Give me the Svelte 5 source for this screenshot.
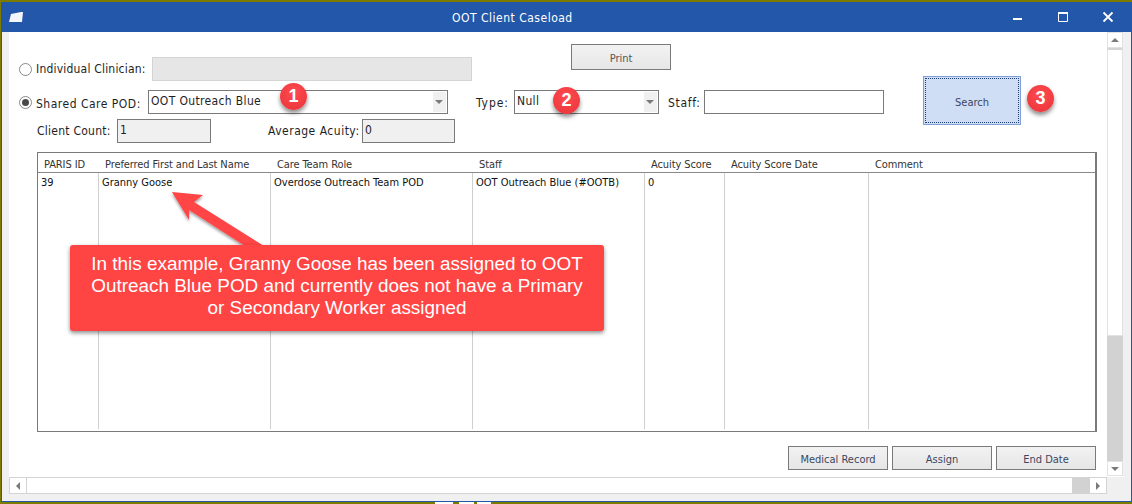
<script lang="ts">
	const columns = [
		{ title: 'PARIS ID', value: '39', width: 61 },
		{ title: 'Preferred First and Last Name', value: 'Granny Goose', width: 172 },
		{ title: 'Care Team Role', value: 'Overdose Outreach Team POD', width: 202 },
		{ title: 'Staff', value: 'OOT Outreach Blue (#OOTB)', width: 172 },
		{ title: 'Acuity Score', value: '0', width: 80 },
		{ title: 'Acuity Score Date', value: '', width: 144 },
		{ title: 'Comment', value: '', width: 227 }
	];
	const badges = [
		{ n: 1, x: 293, y: 96 },
		{ n: 2, x: 566, y: 100 },
		{ n: 3, x: 1040, y: 98 }
	];
</script>

<div class="desktop">
	<div class="window">
		<header class="titlebar">
			<svg class="appicon" width="14" height="12" viewBox="0 0 14 12"><path d="M2 3 L12 1 L14 1 L13 11 L0 11 Z" fill="#fff" opacity="0.95" /></svg>
			<span class="title">OOT Client Caseload</span>
			<div class="controls">
				<svg width="12" height="12" viewBox="0 0 12 12"><rect x="1" y="7" width="9" height="2" fill="#fff" /></svg>
				<svg width="12" height="12" viewBox="0 0 12 12"><path d="M1.5 1.5h9v9h-9z" fill="none" stroke="#fff" /><rect x="1" y="1" width="10" height="2" fill="#fff" /></svg>
				<svg width="12" height="12" viewBox="0 0 12 12"><path d="M1.5 1.5l9 9M10.5 1.5l-9 9" stroke="#fff" stroke-width="1.8" /></svg>
			</div>
		</header>

		<div class="frame">
			<div class="inner">
				<main class="client">
					<div class="print-row"><button class="btn print">Print</button></div>

					<div class="row clinician">
						<span class="radio"></span>
						<span class="label clinician-label">Individual Clinician:</span>
						<div class="field disabled"></div>
					</div>

					<div class="row pod">
						<span class="radio on"></span>
						<span class="label pod-label">Shared Care POD:</span>
						<div class="field combo pod-combo"><span>OOT Outreach Blue</span><i class="drop"></i></div>
						<span class="label type-label">Type:</span>
						<div class="field combo type-combo"><span>Null</span><i class="drop"></i></div>
						<span class="label staff-label">Staff:</span>
						<div class="field staff"></div>
						<button class="btn search"><span>Search</span></button>
					</div>

					<div class="row counts">
						<span class="label count-label">Client Count:</span>
						<div class="field readonly count">1</div>
						<span class="label acuity-label">Average Acuity:</span>
						<div class="field readonly acuity">0</div>
					</div>

					<div class="grid">
						<div class="grid-head">
							{#each columns as c}
								<div class="th" style="width:{c.width}px">{c.title}</div>
							{/each}
						</div>
						<div class="grid-body">
							{#each columns as c}
								<div class="td" style="width:{c.width}px">{c.value}</div>
							{/each}
						</div>
					</div>

					<div class="actions">
						<button class="btn">Medical Record</button>
						<button class="btn">Assign</button>
						<button class="btn">End Date</button>
					</div>
				</main>

				<div class="vscroll">
					<div class="sb-btn"><i class="tri up"></i></div>
					<div class="v-thumb"></div>
					<div class="v-track"></div>
					<div class="sb-btn end"><i class="tri down"></i></div>
				</div>
			</div>

			<div class="hscroll">
				<div class="sb-btn h"><i class="tri left"></i></div>
				<div class="h-thumb"></div>
				<div class="h-track"></div>
				<div class="sb-btn h"><i class="tri right"></i></div>
			</div>
		</div>
	</div>

	<div class="taskbits"><i></i><i></i><i></i></div>

	<!-- annotations on top of the screenshot -->
	<svg class="arrow" width="1132" height="504" viewBox="0 0 1132 504">
		<defs>
			<filter id="sh" x="-20%" y="-20%" width="140%" height="140%">
				<feDropShadow dx="0" dy="2" stdDeviation="1.5" flood-color="#000" flood-opacity="0.4" />
			</filter>
		</defs>
		<polygon points="172,192 203,195 194,202 264,246 245,246 189,210 189,220" fill="#ff4444" filter="url(#sh)" />
	</svg>
	<div class="callout">
		In this example, Granny Goose has been assigned to OOT Outreach Blue POD and currently does not have a Primary or Secondary Worker assigned
	</div>
	{#each badges as b}
		<div class="badge" style="left:{b.x - 13}px; top:{b.y - 13}px">{b.n}</div>
	{/each}
</div>

<style>
	:global(body) {
		margin: 0;
	}

	.desktop {
		position: relative;
		width: 1132px;
		height: 504px;
		overflow: hidden;
		background: #7d7a00;
		padding-top: 2px;
		box-sizing: border-box;
		font-family: 'DejaVu Sans', sans-serif;
		font-stretch: condensed;
		font-size: 11px;
		color: #1e1e1e;
	}

	.window {
		margin-left: 1px;
		width: 1131px;
		height: 500px;
		box-sizing: border-box;
		border: 1px solid #2357a9;
		border-width: 0 1px 1px 1px;
		display: flex;
		flex-direction: column;
		background: #f0f0f0;
	}

	.titlebar {
		height: 30px;
		flex: none;
		background: #2357a9;
		color: #fff;
		display: flex;
		align-items: center;
		font-size: 12px;
	}

	.appicon {
		margin-left: 7px;
	}

	.title {
		margin: 2px 0 0 429px;
		letter-spacing: 0.5px;
	}

	.controls {
		margin-left: auto;
		display: flex;
		gap: 33px;
		padding-right: 17px;
	}

	.frame {
		flex: 1;
		display: flex;
		flex-direction: column;
		padding: 0 8px 7px 7px;
		min-height: 0;
	}

	.inner {
		flex: 1;
		display: flex;
		min-height: 0;
	}

	.client {
		flex: 1;
		background: #fff;
		position: relative;
		padding-top: 12px;
		min-width: 0;
	}

	.print-row {
		padding-left: 562px;
		height: 13px;
	}

	.row {
		display: flex;
		align-items: center;
		height: 24px;
	}

	.pod {
		margin-top: 9px;
		position: relative;
	}

	.counts {
		margin-top: 5px;
		padding-left: 28px;
	}

	.radio {
		width: 13px;
		height: 13px;
		box-sizing: border-box;
		border: 1px solid #8a8a8a;
		border-radius: 50%;
		background: #fff;
		margin: 0 4px 0 10px;
		display: grid;
		place-items: center;
		flex: none;
	}

	.radio.on::after {
		content: '';
		width: 7px;
		height: 7px;
		border-radius: 50%;
		background: #4a4a4a;
	}

	.label {
		font-size: 12px;
		white-space: nowrap;
		flex: none;
	}

	.clinician-label {
		width: 116px;
		letter-spacing: 0.2px;
	}

	.pod-label {
		width: 112px;
		letter-spacing: 0.5px;
		margin-top: 3px;
	}

	.type-label {
		width: 38px;
		margin: 1px 0 0 28px;
		letter-spacing: 0.9px;
	}

	.staff-label {
		width: 36px;
		margin: 2px 0 0 9px;
		letter-spacing: 0.7px;
	}

	.count-label {
		width: 80px;
		letter-spacing: 0.25px;
	}

	.acuity-label {
		width: 94px;
		margin-left: 57px;
		letter-spacing: 0.5px;
	}

	.field {
		box-sizing: border-box;
		height: 24px;
		border: 1px solid #7a7a7a;
		background: #fff;
		font-size: 12px;
		line-height: 21px;
		letter-spacing: 0.35px;
		padding-left: 2px;
		flex: none;
	}

	.disabled {
		width: 320px;
		background: #e6e6e6;
		border-color: #d4d4d4;
	}

	.combo {
		display: flex;
		justify-content: space-between;
	}

	.pod-combo {
		width: 300px;
	}

	.type-combo {
		width: 145px;
	}

	.staff {
		width: 180px;
	}

	.drop {
		width: 13px;
		height: 20px;
		margin: 1px;
		background: #f0f0f0;
		position: relative;
	}

	.drop::after {
		content: '';
		position: absolute;
		left: 2px;
		top: 8px;
		border: 4px solid transparent;
		border-top: 4px solid #7a7a7a;
		border-bottom: 0;
	}

	.readonly {
		background: #f0f0f0;
	}

	.count {
		width: 94px;
	}

	.acuity {
		width: 93px;
	}

	.btn {
		box-sizing: border-box;
		width: 100px;
		height: 24px;
		border: 1px solid #7a7a7a;
		background: linear-gradient(#f2f2f2, #e6e6e6);
		color: #3d4660;
		font: inherit;
		font-size: 11px;
		padding: 2px 0 0;
	}

	.print {
		height: 26px;
		color: #555;
		display: block;
	}

	.search {
		position: absolute;
		left: 914px;
		top: -14px;
		width: 98px;
		height: 49px;
		background: #d0def5;
		border: 1px solid #7f9fd6;
		padding: 1px;
	}

	.search span {
		display: grid;
		place-items: center;
		height: 100%;
		padding-top: 3px;
		border: 1px dotted #223f7a;
		box-sizing: border-box;
	}

	.grid {
		box-sizing: border-box;
		width: 1060px;
		height: 280px;
		margin: 9px 0 0 28px;
		border: 1px solid #7a7a7a;
		border-right-width: 2px;
		display: flex;
		flex-direction: column;
	}

	.grid-head {
		display: flex;
		height: 19px;
		border-bottom: 1px solid #8a8a8a;
		flex: none;
	}

	.th {
		box-sizing: border-box;
		flex: none;
		padding: 5px 0 0 6px;
		white-space: nowrap;
		color: #333;
		letter-spacing: -0.1px;
	}

	.grid-body {
		flex: 1;
		display: flex;
		padding-bottom: 2px;
	}

	.td {
		box-sizing: border-box;
		flex: none;
		border-right: 1px solid #cfcfcf;
		padding: 3px 0 0 3px;
		white-space: nowrap;
		color: #111;
	}

	.td:last-child {
		border-right: 0;
	}

	.actions {
		display: flex;
		justify-content: flex-end;
		gap: 4px;
		margin: 14px 11px 0 0;
	}

	.vscroll {
		width: 16px;
		flex: none;
		display: flex;
		flex-direction: column;
		background: #fff;
	}

	.sb-btn {
		height: 16px;
		flex: none;
		display: grid;
		place-items: center;
		background: #fff;
		box-sizing: border-box;
		border: 1px solid #e2e2e2;
	}

	.sb-btn.end {
		height: 15px;
		margin-bottom: 1px;
	}

	.sb-btn.h {
		width: 16px;
		height: 100%;
		border: 0;
	}

	.v-thumb {
		height: 288px;
		box-sizing: border-box;
		border: 1px solid #e2e2e2;
		border-top: 2px solid #d4d4d4;
		background: #fff;
	}

	.v-track {
		flex: 1;
		background: #d2d2d2;
	}

	.hscroll {
		height: 17px;
		box-sizing: border-box;
		flex: none;
		display: flex;
		margin-right: 16px;
		background: #fff;
		border: 1px solid #d4d4d4;
	}

	.h-thumb {
		flex: 1;
		border-left: 1px solid #d4d4d4;
	}

	.h-track {
		width: 18px;
		background: #d2d2d2;
	}

	.tri {
		width: 0;
		height: 0;
		border: 4px solid transparent;
	}

	.tri.up {
		border-bottom-color: #7a7a7a;
		border-top: 0;
	}

	.tri.down {
		border-top-color: #7a7a7a;
		border-bottom: 0;
	}

	.tri.left {
		border-right-color: #7a7a7a;
		border-left: 0;
	}

	.tri.right {
		border-left-color: #7a7a7a;
		border-right: 0;
	}

	.taskbits {
		position: absolute;
		left: 435px;
		top: 502px;
		display: flex;
		gap: 6px;
	}

	.taskbits i {
		width: 18px;
		height: 2px;
		background: #fff;
	}

	.taskbits i:nth-child(2) {
		width: 15px;
		margin-right: -3px;
	}

	.taskbits i:nth-child(3) {
		width: 14px;
	}

	.arrow {
		position: absolute;
		inset: 0;
		pointer-events: none;
	}

	.callout {
		position: absolute;
		left: 70px;
		top: 245px;
		width: 534px;
		height: 86px;
		box-sizing: border-box;
		padding: 8px 14px 0;
		background: #ff4444;
		border-radius: 3px;
		box-shadow: 0 2px 4px rgba(0, 0, 0, 0.45);
		color: #fff;
		font-family: 'Liberation Sans', sans-serif;
		font-stretch: normal;
		font-size: 18.9px;
		line-height: 22px;
		text-align: center;
	}

	.badge {
		position: absolute;
		width: 27px;
		height: 27px;
		border-radius: 50%;
		background: radial-gradient(circle at 50% 35%, #ff4a4f, #e8333a);
		box-shadow: 0 3px 4px rgba(0, 0, 0, 0.45);
		color: #fff;
		font-family: 'Liberation Sans', sans-serif;
		font-stretch: normal;
		font-weight: 700;
		font-size: 18px;
		line-height: 27px;
		text-align: center;
	}
</style>
